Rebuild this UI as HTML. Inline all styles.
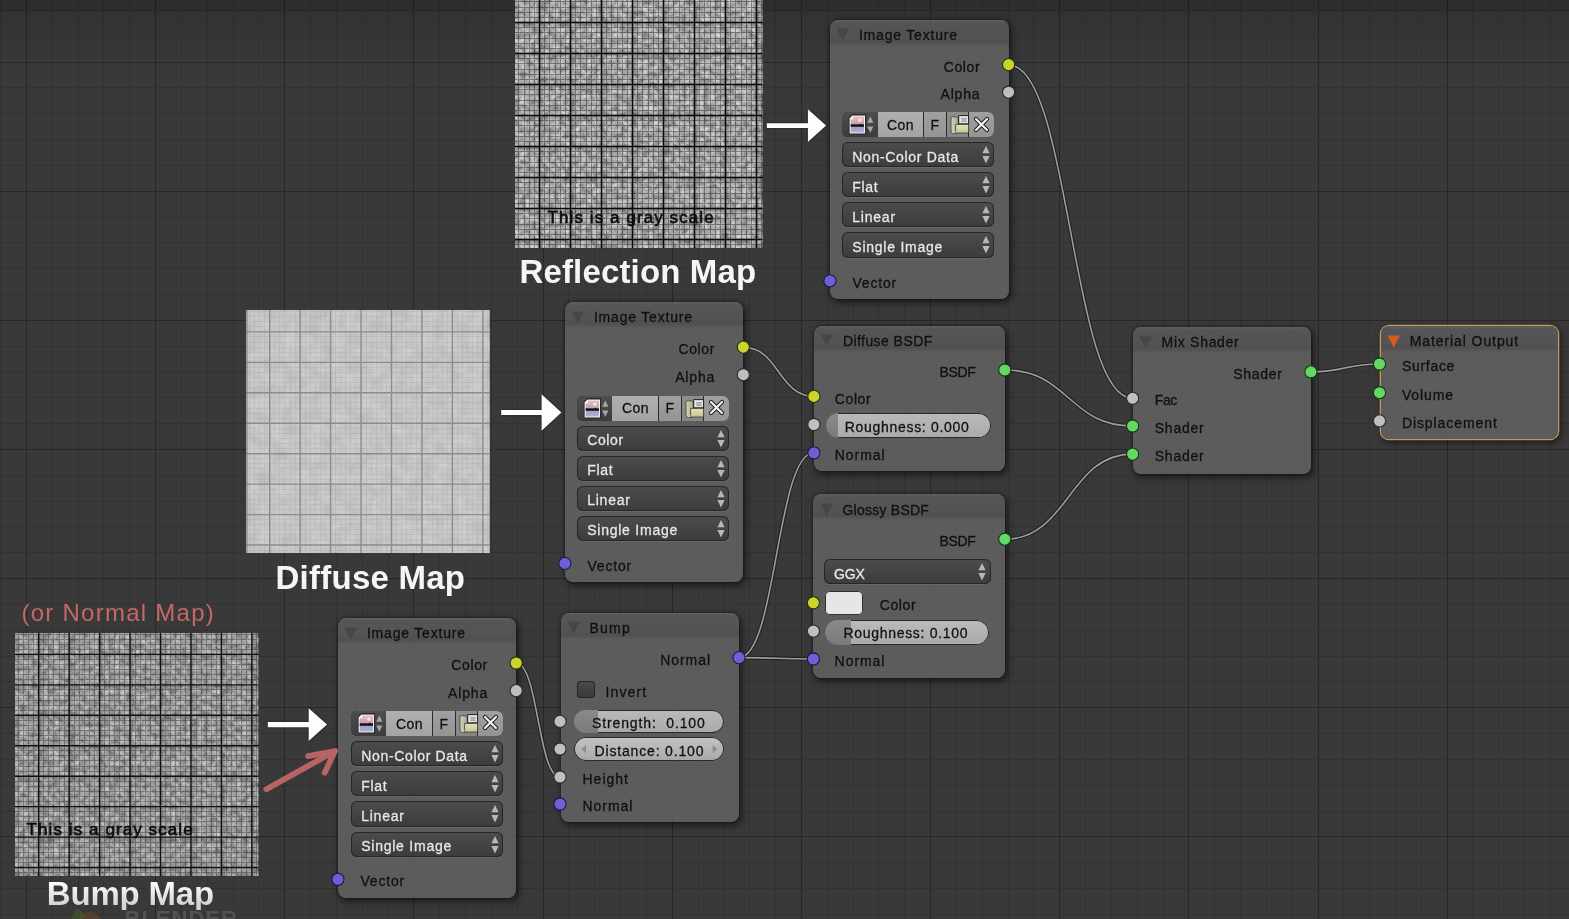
<!DOCTYPE html><html><head><meta charset="utf-8"><style>html,body{margin:0;padding:0;width:1569px;height:919px;overflow:hidden;background:#393939}.abs{position:absolute;overflow:visible}.t{position:absolute;white-space:pre;font-family:"Liberation Sans", sans-serif}.node{position:absolute;border-radius:8px;background:rgba(100,100,100,0.82);overflow:hidden}.hdr{position:absolute;left:0;right:0;top:0;background:linear-gradient(rgba(255,250,255,0.03) 0px,rgba(10,0,20,0.08) 3px,rgba(10,0,20,0.10) 17px,rgba(10,0,20,0.14) 22px,rgba(0,0,0,0) 100%)}.dd{position:absolute;border-radius:6px;background:linear-gradient(#4c4c4c,#3c3c3c);box-shadow:inset 0 0 0 1px #262626, 0 1px 0 rgba(255,255,255,0.08)}.idrow{position:absolute;border-radius:6px;overflow:hidden;box-shadow:inset 0 0 0 1px #262626}.sl{position:absolute;border-radius:12.5px;overflow:hidden;background:linear-gradient(#bababa,#aaaaaa);box-shadow:inset 0 0 0 1px #2a2a2a}</style></head><body><div style="position:relative;width:1569px;height:919px;overflow:hidden"><svg class="abs" width="1569" height="919" style="left:0;top:0" shape-rendering="crispEdges"><rect width="1569" height="919" fill="#393939"/><rect x="0" y="0" width="1" height="919" fill="#323232"/><rect x="26" y="0" width="1" height="919" fill="#272727"/><rect x="52" y="0" width="1" height="919" fill="#323232"/><rect x="78" y="0" width="1" height="919" fill="#323232"/><rect x="103" y="0" width="1" height="919" fill="#323232"/><rect x="129" y="0" width="1" height="919" fill="#323232"/><rect x="155" y="0" width="1" height="919" fill="#272727"/><rect x="181" y="0" width="1" height="919" fill="#323232"/><rect x="207" y="0" width="1" height="919" fill="#323232"/><rect x="233" y="0" width="1" height="919" fill="#323232"/><rect x="258" y="0" width="1" height="919" fill="#323232"/><rect x="284" y="0" width="1" height="919" fill="#272727"/><rect x="310" y="0" width="1" height="919" fill="#323232"/><rect x="336" y="0" width="1" height="919" fill="#323232"/><rect x="362" y="0" width="1" height="919" fill="#323232"/><rect x="388" y="0" width="1" height="919" fill="#323232"/><rect x="413" y="0" width="1" height="919" fill="#272727"/><rect x="439" y="0" width="1" height="919" fill="#323232"/><rect x="465" y="0" width="1" height="919" fill="#323232"/><rect x="491" y="0" width="1" height="919" fill="#323232"/><rect x="517" y="0" width="1" height="919" fill="#323232"/><rect x="543" y="0" width="1" height="919" fill="#272727"/><rect x="568" y="0" width="1" height="919" fill="#323232"/><rect x="594" y="0" width="1" height="919" fill="#323232"/><rect x="620" y="0" width="1" height="919" fill="#323232"/><rect x="646" y="0" width="1" height="919" fill="#323232"/><rect x="672" y="0" width="1" height="919" fill="#272727"/><rect x="698" y="0" width="1" height="919" fill="#323232"/><rect x="723" y="0" width="1" height="919" fill="#323232"/><rect x="749" y="0" width="1" height="919" fill="#323232"/><rect x="775" y="0" width="1" height="919" fill="#323232"/><rect x="801" y="0" width="1" height="919" fill="#272727"/><rect x="827" y="0" width="1" height="919" fill="#323232"/><rect x="853" y="0" width="1" height="919" fill="#323232"/><rect x="878" y="0" width="1" height="919" fill="#323232"/><rect x="904" y="0" width="1" height="919" fill="#323232"/><rect x="930" y="0" width="1" height="919" fill="#272727"/><rect x="956" y="0" width="1" height="919" fill="#323232"/><rect x="982" y="0" width="1" height="919" fill="#323232"/><rect x="1008" y="0" width="1" height="919" fill="#323232"/><rect x="1033" y="0" width="1" height="919" fill="#323232"/><rect x="1059" y="0" width="1" height="919" fill="#272727"/><rect x="1085" y="0" width="1" height="919" fill="#323232"/><rect x="1111" y="0" width="1" height="919" fill="#323232"/><rect x="1137" y="0" width="1" height="919" fill="#323232"/><rect x="1163" y="0" width="1" height="919" fill="#323232"/><rect x="1188" y="0" width="1" height="919" fill="#272727"/><rect x="1214" y="0" width="1" height="919" fill="#323232"/><rect x="1240" y="0" width="1" height="919" fill="#323232"/><rect x="1266" y="0" width="1" height="919" fill="#323232"/><rect x="1292" y="0" width="1" height="919" fill="#323232"/><rect x="1318" y="0" width="1" height="919" fill="#272727"/><rect x="1343" y="0" width="1" height="919" fill="#323232"/><rect x="1369" y="0" width="1" height="919" fill="#323232"/><rect x="1395" y="0" width="1" height="919" fill="#323232"/><rect x="1421" y="0" width="1" height="919" fill="#323232"/><rect x="1447" y="0" width="1" height="919" fill="#272727"/><rect x="1472" y="0" width="1" height="919" fill="#323232"/><rect x="1498" y="0" width="1" height="919" fill="#323232"/><rect x="1524" y="0" width="1" height="919" fill="#323232"/><rect x="1550" y="0" width="1" height="919" fill="#323232"/><rect x="0" y="-15" width="1569" height="1" fill="#323232"/><rect x="0" y="10" width="1569" height="1" fill="#323232"/><rect x="0" y="36" width="1569" height="1" fill="#323232"/><rect x="0" y="62" width="1569" height="1" fill="#272727"/><rect x="0" y="87" width="1569" height="1" fill="#323232"/><rect x="0" y="113" width="1569" height="1" fill="#323232"/><rect x="0" y="139" width="1569" height="1" fill="#323232"/><rect x="0" y="165" width="1569" height="1" fill="#323232"/><rect x="0" y="191" width="1569" height="1" fill="#272727"/><rect x="0" y="217" width="1569" height="1" fill="#323232"/><rect x="0" y="242" width="1569" height="1" fill="#323232"/><rect x="0" y="268" width="1569" height="1" fill="#323232"/><rect x="0" y="294" width="1569" height="1" fill="#323232"/><rect x="0" y="320" width="1569" height="1" fill="#272727"/><rect x="0" y="346" width="1569" height="1" fill="#323232"/><rect x="0" y="372" width="1569" height="1" fill="#323232"/><rect x="0" y="397" width="1569" height="1" fill="#323232"/><rect x="0" y="423" width="1569" height="1" fill="#323232"/><rect x="0" y="449" width="1569" height="1" fill="#272727"/><rect x="0" y="475" width="1569" height="1" fill="#323232"/><rect x="0" y="501" width="1569" height="1" fill="#323232"/><rect x="0" y="526" width="1569" height="1" fill="#323232"/><rect x="0" y="552" width="1569" height="1" fill="#323232"/><rect x="0" y="578" width="1569" height="1" fill="#272727"/><rect x="0" y="604" width="1569" height="1" fill="#323232"/><rect x="0" y="630" width="1569" height="1" fill="#323232"/><rect x="0" y="656" width="1569" height="1" fill="#323232"/><rect x="0" y="681" width="1569" height="1" fill="#323232"/><rect x="0" y="707" width="1569" height="1" fill="#272727"/><rect x="0" y="733" width="1569" height="1" fill="#323232"/><rect x="0" y="759" width="1569" height="1" fill="#323232"/><rect x="0" y="785" width="1569" height="1" fill="#323232"/><rect x="0" y="811" width="1569" height="1" fill="#323232"/><rect x="0" y="836" width="1569" height="1" fill="#272727"/><rect x="0" y="862" width="1569" height="1" fill="#323232"/><rect x="0" y="888" width="1569" height="1" fill="#323232"/><rect x="0" y="914" width="1569" height="1" fill="#323232"/><defs><linearGradient id="topsh" x1="0" y1="0" x2="0" y2="1"><stop offset="0" stop-color="#000" stop-opacity="0.13"/><stop offset="1" stop-color="#000" stop-opacity="0"/></linearGradient></defs><rect width="1569" height="10.5" fill="#000" opacity="0.2"/><rect y="10.5" width="1569" height="60" fill="url(#topsh)"/></svg><svg class="abs" width="247.5" height="248" style="left:515px;top:0px"><defs><filter id="n_refl" x="0" y="0" width="100%" height="100%" color-interpolation-filters="sRGB"><feTurbulence type="fractalNoise" baseFrequency="0.18" numOctaves="4" seed="28"/><feColorMatrix type="matrix" values="1.8 0 0 0 -0.4  1.8 0 0 0 -0.4  1.8 0 0 0 -0.4  0 0 0 0 1"/></filter></defs><rect width="247.5" height="248" fill="#ababab"/><rect width="247.5" height="248" filter="url(#n_refl)" opacity="0.5" style="mix-blend-mode:overlay"/><path d="M3.83 0V248M9 0V248M14.17 0V248M19.33 0V248M29.67 0V248M34.83 0V248M40 0V248M45.17 0V248M50.33 0V248M60.67 0V248M65.83 0V248M71 0V248M76.17 0V248M81.33 0V248M91.67 0V248M96.83 0V248M102 0V248M107.17 0V248M112.33 0V248M122.67 0V248M127.83 0V248M133 0V248M138.17 0V248M143.33 0V248M153.67 0V248M158.83 0V248M164 0V248M169.17 0V248M174.33 0V248M184.67 0V248M189.83 0V248M195 0V248M200.17 0V248M205.33 0V248M215.67 0V248M220.83 0V248M226 0V248M231.17 0V248M236.33 0V248M246.67 0V248M0 1.83H247.5M0 7H247.5M0 12.17H247.5M0 17.33H247.5M0 27.67H247.5M0 32.83H247.5M0 38H247.5M0 43.17H247.5M0 48.33H247.5M0 58.67H247.5M0 63.83H247.5M0 69H247.5M0 74.17H247.5M0 79.33H247.5M0 89.67H247.5M0 94.83H247.5M0 100H247.5M0 105.17H247.5M0 110.33H247.5M0 120.67H247.5M0 125.83H247.5M0 131H247.5M0 136.17H247.5M0 141.33H247.5M0 151.67H247.5M0 156.83H247.5M0 162H247.5M0 167.17H247.5M0 172.33H247.5M0 182.67H247.5M0 187.83H247.5M0 193H247.5M0 198.17H247.5M0 203.33H247.5M0 213.67H247.5M0 218.83H247.5M0 224H247.5M0 229.17H247.5M0 234.33H247.5M0 244.67H247.5" stroke="#202020" stroke-width="1" opacity="0.45" fill="none" shape-rendering="crispEdges"/><filter id="rough_refl"><feTurbulence type="turbulence" baseFrequency="0.5" numOctaves="1" seed="3"/><feDisplacementMap in="SourceGraphic" scale="3.5"/></filter><path d="M24.5 0V248M55.5 0V248M86.5 0V248M117.5 0V248M148.5 0V248M179.5 0V248M210.5 0V248M241.5 0V248M0 22.5H247.5M0 53.5H247.5M0 84.5H247.5M0 115.5H247.5M0 146.5H247.5M0 177.5H247.5M0 208.5H247.5M0 239.5H247.5" stroke="#080808" stroke-width="4.0" opacity="0.14" fill="none" filter="url(#rough_refl)"/><path d="M24.5 0V248M55.5 0V248M86.5 0V248M117.5 0V248M148.5 0V248M179.5 0V248M210.5 0V248M241.5 0V248M0 22.5H247.5M0 53.5H247.5M0 84.5H247.5M0 115.5H247.5M0 146.5H247.5M0 177.5H247.5M0 208.5H247.5M0 239.5H247.5" stroke="#080808" stroke-width="1.5" fill="none"/></svg><svg class="abs" width="243.7" height="243" style="left:246.3px;top:310px"><defs><filter id="n_diff" x="0" y="0" width="100%" height="100%" color-interpolation-filters="sRGB"><feTurbulence type="fractalNoise" baseFrequency="0.08" numOctaves="4" seed="28"/><feColorMatrix type="matrix" values="1.5 0 0 0 -0.25  1.5 0 0 0 -0.25  1.5 0 0 0 -0.25  0 0 0 0 1"/></filter></defs><rect width="243.7" height="243" fill="#c7c7c9"/><rect width="243.7" height="243" filter="url(#n_diff)" opacity="0.16" style="mix-blend-mode:overlay"/><path d="M3.4 0V243M8.47 0V243M13.55 0V243M18.62 0V243M28.77 0V243M33.85 0V243M38.92 0V243M44 0V243M49.08 0V243M59.22 0V243M64.3 0V243M69.38 0V243M74.45 0V243M79.53 0V243M89.68 0V243M94.75 0V243M99.83 0V243M104.9 0V243M109.98 0V243M120.12 0V243M125.2 0V243M130.28 0V243M135.35 0V243M140.43 0V243M150.57 0V243M155.65 0V243M160.72 0V243M165.8 0V243M170.88 0V243M181.03 0V243M186.1 0V243M191.17 0V243M196.25 0V243M201.32 0V243M211.47 0V243M216.55 0V243M221.62 0V243M226.7 0V243M231.78 0V243M241.92 0V243M0 1.6H243.7M0 6.67H243.7M0 11.75H243.7M0 16.82H243.7M0 26.97H243.7M0 32.05H243.7M0 37.12H243.7M0 42.2H243.7M0 47.27H243.7M0 57.42H243.7M0 62.5H243.7M0 67.58H243.7M0 72.65H243.7M0 77.72H243.7M0 87.88H243.7M0 92.95H243.7M0 98.03H243.7M0 103.1H243.7M0 108.18H243.7M0 118.32H243.7M0 123.4H243.7M0 128.47H243.7M0 133.55H243.7M0 138.62H243.7M0 148.78H243.7M0 153.85H243.7M0 158.93H243.7M0 164H243.7M0 169.08H243.7M0 179.23H243.7M0 184.3H243.7M0 189.38H243.7M0 194.45H243.7M0 199.53H243.7M0 209.68H243.7M0 214.75H243.7M0 219.83H243.7M0 224.9H243.7M0 229.98H243.7M0 240.12H243.7" stroke="#808080" stroke-width="1" opacity="0.16" fill="none" shape-rendering="crispEdges"/><path d="M23.7 0V243M54.15 0V243M84.6 0V243M115.05 0V243M145.5 0V243M175.95 0V243M206.4 0V243M236.85 0V243M0 21.9H243.7M0 52.35H243.7M0 82.8H243.7M0 113.25H243.7M0 143.7H243.7M0 174.15H243.7M0 204.6H243.7M0 235.05H243.7" stroke="#8c8c8e" stroke-width="1.4" fill="none"/><rect x="0.5" y="0" width="1" height="243" fill="#7a7a7a"/></svg><svg class="abs" width="243.4" height="243" style="left:15px;top:633px"><defs><filter id="n_bump" x="0" y="0" width="100%" height="100%" color-interpolation-filters="sRGB"><feTurbulence type="fractalNoise" baseFrequency="0.18" numOctaves="4" seed="28"/><feColorMatrix type="matrix" values="1.7 0 0 0 -0.35  1.7 0 0 0 -0.35  1.7 0 0 0 -0.35  0 0 0 0 1"/></filter></defs><rect width="243.4" height="243" fill="#a0a0a0"/><rect width="243.4" height="243" filter="url(#n_bump)" opacity="0.42" style="mix-blend-mode:overlay"/><path d="M3.4 0V243M8.47 0V243M13.55 0V243M18.62 0V243M28.77 0V243M33.85 0V243M38.92 0V243M44 0V243M49.08 0V243M59.22 0V243M64.3 0V243M69.38 0V243M74.45 0V243M79.53 0V243M89.68 0V243M94.75 0V243M99.83 0V243M104.9 0V243M109.98 0V243M120.12 0V243M125.2 0V243M130.28 0V243M135.35 0V243M140.43 0V243M150.57 0V243M155.65 0V243M160.72 0V243M165.8 0V243M170.88 0V243M181.03 0V243M186.1 0V243M191.17 0V243M196.25 0V243M201.32 0V243M211.47 0V243M216.55 0V243M221.62 0V243M226.7 0V243M231.78 0V243M241.92 0V243M0 1.1H243.4M0 6.17H243.4M0 11.25H243.4M0 16.32H243.4M0 26.47H243.4M0 31.55H243.4M0 36.62H243.4M0 41.7H243.4M0 46.77H243.4M0 56.92H243.4M0 62H243.4M0 67.08H243.4M0 72.15H243.4M0 77.22H243.4M0 87.38H243.4M0 92.45H243.4M0 97.53H243.4M0 102.6H243.4M0 107.68H243.4M0 117.82H243.4M0 122.9H243.4M0 127.97H243.4M0 133.05H243.4M0 138.12H243.4M0 148.28H243.4M0 153.35H243.4M0 158.43H243.4M0 163.5H243.4M0 168.58H243.4M0 178.73H243.4M0 183.8H243.4M0 188.88H243.4M0 193.95H243.4M0 199.03H243.4M0 209.18H243.4M0 214.25H243.4M0 219.33H243.4M0 224.4H243.4M0 229.48H243.4M0 239.62H243.4" stroke="#2a2a2a" stroke-width="1" opacity="0.42" fill="none" shape-rendering="crispEdges"/><filter id="rough_bump"><feTurbulence type="turbulence" baseFrequency="0.5" numOctaves="1" seed="3"/><feDisplacementMap in="SourceGraphic" scale="3.5"/></filter><path d="M23.7 0V243M54.15 0V243M84.6 0V243M115.05 0V243M145.5 0V243M175.95 0V243M206.4 0V243M236.85 0V243M0 21.4H243.4M0 51.85H243.4M0 82.3H243.4M0 112.75H243.4M0 143.2H243.4M0 173.65H243.4M0 204.1H243.4M0 234.55H243.4" stroke="#101010" stroke-width="3.9" opacity="0.14" fill="none" filter="url(#rough_bump)"/><path d="M23.7 0V243M54.15 0V243M84.6 0V243M115.05 0V243M145.5 0V243M175.95 0V243M206.4 0V243M236.85 0V243M0 21.4H243.4M0 51.85H243.4M0 82.3H243.4M0 112.75H243.4M0 143.2H243.4M0 173.65H243.4M0 204.1H243.4M0 234.55H243.4" stroke="#101010" stroke-width="1.4" fill="none"/></svg><div class="t" style="left:547.6px;top:209.31px;font-size:17px;line-height:17px;color:#0a0a0a;letter-spacing:1.079px;font-weight:normal;-webkit-text-stroke:0.55px #0a0a0a">This is a gray scale</div><div class="t" style="left:26.6px;top:821.21px;font-size:17px;line-height:17px;color:#0a0a0a;letter-spacing:1.079px;font-weight:normal;-webkit-text-stroke:0.55px #0a0a0a">This is a gray scale</div><div class="t" style="left:519.5px;top:254.67px;font-size:33px;line-height:33px;color:#f6f6f6;letter-spacing:0.150px;font-weight:bold;">Reflection Map</div><div class="t" style="left:275.5px;top:561.27px;font-size:33px;line-height:33px;color:#f6f6f6;letter-spacing:0.250px;font-weight:bold;">Diffuse Map</div><div class="t" style="left:46.8px;top:877.27px;font-size:33px;line-height:33px;color:#f0f0f0;letter-spacing:-0.200px;font-weight:bold;background:linear-gradient(#fbfbfb 20%,#d4d4d4 85%);-webkit-background-clip:text;background-clip:text;-webkit-text-fill-color:transparent;">Bump Map</div><div class="t" style="left:21.5px;top:601.28px;font-size:24px;line-height:24px;color:#c46868;letter-spacing:1.258px;font-weight:normal;">(or Normal Map)</div><div class="node" style="left:829.9px;top:19.7px;width:178.7px;height:279.5px;box-shadow:2px 3px 7px 1px rgba(0,0,0,0.5), 0 0 2px 1px rgba(0,0,0,0.25);"><div class="hdr" style="height:26px"></div></div><svg class="abs" width="14" height="14" style="left:836.2px;top:27.2px"><path d="M0.5 1.5H13L6.75 13.5Z" fill="#47454a"/></svg><div class="t" style="left:858.9px;top:27.95px;font-size:14px;line-height:14px;color:#101010;letter-spacing:0.812px;font-weight:normal;-webkit-text-stroke:0.28px #101010;">Image Texture</div><div class="t" style="right:588.79px;top:59.75px;font-size:14px;line-height:14px;color:#101010;letter-spacing:0.606px;font-weight:normal;-webkit-text-stroke:0.28px #101010;">Color</div><div class="t" style="right:588.58px;top:87.35px;font-size:14px;line-height:14px;color:#101010;letter-spacing:0.823px;font-weight:normal;-webkit-text-stroke:0.28px #101010;">Alpha</div><div class="idrow" style="left:842.3px;top:112.1px;width:151.5px;height:25.2px"><div style="position:absolute;left:0px;top:0;width:35.3px;height:100%;background:linear-gradient(#4e4e4e,#3c3c3c);box-sizing:border-box"></div><div style="position:absolute;left:35.3px;top:0;width:45.7px;height:100%;background:linear-gradient(#b0b0b0,#a4a4a4);box-sizing:border-box"></div><div style="position:absolute;left:81px;top:0;width:22.9px;height:100%;background:linear-gradient(#a0a0a0,#949494);border-left:1px solid #2a2a2a;box-sizing:border-box"></div><div style="position:absolute;left:103.9px;top:0;width:22.3px;height:100%;background:linear-gradient(#8e8e8e,#868686);border-left:1px solid #2a2a2a;box-sizing:border-box"></div><div style="position:absolute;left:126.2px;top:0;width:25.3px;height:100%;background:linear-gradient(#a0a0a0,#949494);border-left:1px solid #2a2a2a;box-sizing:border-box"></div></div><svg class="abs" width="36" height="24" style="left:842.3px;top:112.1px"><defs><linearGradient id="imgic" x1="0" y1="0" x2="0" y2="1"><stop offset="0" stop-color="#e4c0c8"/><stop offset="0.5" stop-color="#cc98a4"/><stop offset="0.5" stop-color="#9a9ac8"/><stop offset="1" stop-color="#b0b0d8"/></linearGradient><radialGradient id="sun" cx="0.5" cy="0.5" r="0.5"><stop offset="0" stop-color="#fff" stop-opacity="0.95"/><stop offset="1" stop-color="#fff" stop-opacity="0"/></radialGradient></defs><path d="M10.3 2.3H23.8V22.3H6.8V5.8Z" fill="#1a1a1a" opacity="0.85"/><path d="M10.6 3.4H23V21.6H7.6V6.4Z" fill="#f2f2f2"/><path d="M11.3 4.6H22V20.6H8.7V7.2H11.3Z" fill="url(#imgic)"/><circle cx="17.8" cy="8.2" r="2.6" fill="url(#sun)"/><path d="M8.7 12.6L10 12.1L11.2 12.7L12.6 11.9L14 12.5L15.5 12.2L17 12.6L18.6 11.8L20 12.4L22 12.2V14.8H8.7Z" fill="#101010"/><path d="M7.6 6.4L10.6 3.4V6.4Z" fill="#fafafa"/><path d="M28.3 4.6L31.4 10.7H25.2Z M28.3 20.7L31.4 14.5H25.2Z" fill="#a6a6a6"/></svg><div class="t" style="left:887px;top:117.85px;font-size:14px;line-height:14px;color:#111;letter-spacing:0.480px;font-weight:normal;-webkit-text-stroke:0.28px #111;">Con</div><div class="t" style="left:930.5px;top:117.85px;font-size:14px;line-height:14px;color:#111;letter-spacing:-0.865px;font-weight:normal;-webkit-text-stroke:0.28px #111;">F</div><svg class="abs" width="24" height="25" style="left:946.2px;top:112.1px"><defs><linearGradient id="fold" x1="0" y1="0" x2="0" y2="1"><stop offset="0" stop-color="#e4e2c0"/><stop offset="1" stop-color="#c8c490"/></linearGradient><linearGradient id="foldb" x1="0" y1="0" x2="1" y2="0"><stop offset="0" stop-color="#d8d6b8"/><stop offset="1" stop-color="#a8a688"/></linearGradient></defs><path d="M5 5.6Q5 4.8 6 4.8H10.5L12.3 6.2V21H7.2Q5 21 5 19Z" fill="url(#foldb)" stroke="#3a3a30" stroke-width="0.8"/><path d="M12.7 3.6H22.6V11.8H12.7Z" fill="#e6e6e6" stroke="#111" stroke-width="0.9"/><path d="M15.3 6.8H20.6M15.3 9.1H20.6" stroke="#8a8a8a" stroke-width="1.2"/><path d="M9.6 12.4H22.6V21H8.2Q9.6 20.4 9.6 19Z" fill="url(#fold)" stroke="#3a3a30" stroke-width="0.8"/><path d="M6 19.6Q7.5 21.5 9.4 19.8" fill="none" stroke="#f0eed8" stroke-width="1"/></svg><svg class="abs" width="18" height="18" style="left:973px;top:115.6px"><path d="M3 3L14 14M14 3L3 14" stroke="#1e1e1e" stroke-width="4.2" stroke-linecap="round"/><path d="M3 3L14 14M14 3L3 14" stroke="#f4f4f4" stroke-width="2.2" stroke-linecap="round"/></svg><div class="dd" style="left:842.3px;top:142.1px;width:152.2px;height:25.2px"></div><div class="t" style="left:852.3px;top:149.75px;font-size:14px;line-height:14px;color:#e8e8e8;letter-spacing:0.669px;font-weight:normal;-webkit-text-stroke:0.28px #e8e8e8;">Non-Color Data</div><svg class="abs" width="10" height="24" style="left:981.1px;top:142.1px"><path d="M5 3.9L8.6 11.2H1.4Z M5 21.4L8.6 14H1.4Z" fill="#b8b8b8"/></svg><div class="dd" style="left:842.3px;top:172.2px;width:152.2px;height:25.2px"></div><div class="t" style="left:852.3px;top:179.85px;font-size:14px;line-height:14px;color:#e8e8e8;letter-spacing:0.705px;font-weight:normal;-webkit-text-stroke:0.28px #e8e8e8;">Flat</div><svg class="abs" width="10" height="24" style="left:981.1px;top:172.2px"><path d="M5 3.9L8.6 11.2H1.4Z M5 21.4L8.6 14H1.4Z" fill="#b8b8b8"/></svg><div class="dd" style="left:842.3px;top:202.3px;width:152.2px;height:25.2px"></div><div class="t" style="left:852.3px;top:209.95px;font-size:14px;line-height:14px;color:#e8e8e8;letter-spacing:0.769px;font-weight:normal;-webkit-text-stroke:0.28px #e8e8e8;">Linear</div><svg class="abs" width="10" height="24" style="left:981.1px;top:202.3px"><path d="M5 3.9L8.6 11.2H1.4Z M5 21.4L8.6 14H1.4Z" fill="#b8b8b8"/></svg><div class="dd" style="left:842.3px;top:232.4px;width:152.2px;height:25.2px"></div><div class="t" style="left:852.3px;top:240.05px;font-size:14px;line-height:14px;color:#e8e8e8;letter-spacing:0.760px;font-weight:normal;-webkit-text-stroke:0.28px #e8e8e8;">Single Image</div><svg class="abs" width="10" height="24" style="left:981.1px;top:232.4px"><path d="M5 3.9L8.6 11.2H1.4Z M5 21.4L8.6 14H1.4Z" fill="#b8b8b8"/></svg><div class="t" style="left:852.4px;top:276.05px;font-size:14px;line-height:14px;color:#101010;letter-spacing:0.833px;font-weight:normal;-webkit-text-stroke:0.28px #101010;">Vector</div><div class="node" style="left:564.9px;top:302.2px;width:178.4px;height:279.5px;box-shadow:2px 3px 7px 1px rgba(0,0,0,0.5), 0 0 2px 1px rgba(0,0,0,0.25);"><div class="hdr" style="height:26px"></div></div><svg class="abs" width="14" height="14" style="left:571.2px;top:309.7px"><path d="M0.5 1.5H13L6.75 13.5Z" fill="#47454a"/></svg><div class="t" style="left:593.9px;top:310.45px;font-size:14px;line-height:14px;color:#101010;letter-spacing:0.812px;font-weight:normal;-webkit-text-stroke:0.28px #101010;">Image Texture</div><div class="t" style="right:854.09px;top:342.25px;font-size:14px;line-height:14px;color:#101010;letter-spacing:0.606px;font-weight:normal;-webkit-text-stroke:0.28px #101010;">Color</div><div class="t" style="right:853.88px;top:369.85px;font-size:14px;line-height:14px;color:#101010;letter-spacing:0.823px;font-weight:normal;-webkit-text-stroke:0.28px #101010;">Alpha</div><div class="idrow" style="left:577.2px;top:395.6px;width:151.5px;height:25.2px"><div style="position:absolute;left:0px;top:0;width:35.3px;height:100%;background:linear-gradient(#4e4e4e,#3c3c3c);box-sizing:border-box"></div><div style="position:absolute;left:35.3px;top:0;width:45.7px;height:100%;background:linear-gradient(#b0b0b0,#a4a4a4);box-sizing:border-box"></div><div style="position:absolute;left:81px;top:0;width:22.9px;height:100%;background:linear-gradient(#a0a0a0,#949494);border-left:1px solid #2a2a2a;box-sizing:border-box"></div><div style="position:absolute;left:103.9px;top:0;width:22.3px;height:100%;background:linear-gradient(#8e8e8e,#868686);border-left:1px solid #2a2a2a;box-sizing:border-box"></div><div style="position:absolute;left:126.2px;top:0;width:25.3px;height:100%;background:linear-gradient(#a0a0a0,#949494);border-left:1px solid #2a2a2a;box-sizing:border-box"></div></div><svg class="abs" width="36" height="24" style="left:577.2px;top:395.6px"><defs><linearGradient id="imgic" x1="0" y1="0" x2="0" y2="1"><stop offset="0" stop-color="#e4c0c8"/><stop offset="0.5" stop-color="#cc98a4"/><stop offset="0.5" stop-color="#9a9ac8"/><stop offset="1" stop-color="#b0b0d8"/></linearGradient><radialGradient id="sun" cx="0.5" cy="0.5" r="0.5"><stop offset="0" stop-color="#fff" stop-opacity="0.95"/><stop offset="1" stop-color="#fff" stop-opacity="0"/></radialGradient></defs><path d="M10.3 2.3H23.8V22.3H6.8V5.8Z" fill="#1a1a1a" opacity="0.85"/><path d="M10.6 3.4H23V21.6H7.6V6.4Z" fill="#f2f2f2"/><path d="M11.3 4.6H22V20.6H8.7V7.2H11.3Z" fill="url(#imgic)"/><circle cx="17.8" cy="8.2" r="2.6" fill="url(#sun)"/><path d="M8.7 12.6L10 12.1L11.2 12.7L12.6 11.9L14 12.5L15.5 12.2L17 12.6L18.6 11.8L20 12.4L22 12.2V14.8H8.7Z" fill="#101010"/><path d="M7.6 6.4L10.6 3.4V6.4Z" fill="#fafafa"/><path d="M28.3 4.6L31.4 10.7H25.2Z M28.3 20.7L31.4 14.5H25.2Z" fill="#a6a6a6"/></svg><div class="t" style="left:621.9px;top:401.35px;font-size:14px;line-height:14px;color:#111;letter-spacing:0.480px;font-weight:normal;-webkit-text-stroke:0.28px #111;">Con</div><div class="t" style="left:665.4px;top:401.35px;font-size:14px;line-height:14px;color:#111;letter-spacing:-0.865px;font-weight:normal;-webkit-text-stroke:0.28px #111;">F</div><svg class="abs" width="24" height="25" style="left:681.1px;top:395.6px"><defs><linearGradient id="fold" x1="0" y1="0" x2="0" y2="1"><stop offset="0" stop-color="#e4e2c0"/><stop offset="1" stop-color="#c8c490"/></linearGradient><linearGradient id="foldb" x1="0" y1="0" x2="1" y2="0"><stop offset="0" stop-color="#d8d6b8"/><stop offset="1" stop-color="#a8a688"/></linearGradient></defs><path d="M5 5.6Q5 4.8 6 4.8H10.5L12.3 6.2V21H7.2Q5 21 5 19Z" fill="url(#foldb)" stroke="#3a3a30" stroke-width="0.8"/><path d="M12.7 3.6H22.6V11.8H12.7Z" fill="#e6e6e6" stroke="#111" stroke-width="0.9"/><path d="M15.3 6.8H20.6M15.3 9.1H20.6" stroke="#8a8a8a" stroke-width="1.2"/><path d="M9.6 12.4H22.6V21H8.2Q9.6 20.4 9.6 19Z" fill="url(#fold)" stroke="#3a3a30" stroke-width="0.8"/><path d="M6 19.6Q7.5 21.5 9.4 19.8" fill="none" stroke="#f0eed8" stroke-width="1"/></svg><svg class="abs" width="18" height="18" style="left:707.9px;top:399.1px"><path d="M3 3L14 14M14 3L3 14" stroke="#1e1e1e" stroke-width="4.2" stroke-linecap="round"/><path d="M3 3L14 14M14 3L3 14" stroke="#f4f4f4" stroke-width="2.2" stroke-linecap="round"/></svg><div class="dd" style="left:577.2px;top:425.5px;width:152.2px;height:25.2px"></div><div class="t" style="left:587.2px;top:433.15px;font-size:14px;line-height:14px;color:#e8e8e8;letter-spacing:0.606px;font-weight:normal;-webkit-text-stroke:0.28px #e8e8e8;">Color</div><svg class="abs" width="10" height="24" style="left:716px;top:425.5px"><path d="M5 3.9L8.6 11.2H1.4Z M5 21.4L8.6 14H1.4Z" fill="#b8b8b8"/></svg><div class="dd" style="left:577.2px;top:455.6px;width:152.2px;height:25.2px"></div><div class="t" style="left:587.2px;top:463.25px;font-size:14px;line-height:14px;color:#e8e8e8;letter-spacing:0.705px;font-weight:normal;-webkit-text-stroke:0.28px #e8e8e8;">Flat</div><svg class="abs" width="10" height="24" style="left:716px;top:455.6px"><path d="M5 3.9L8.6 11.2H1.4Z M5 21.4L8.6 14H1.4Z" fill="#b8b8b8"/></svg><div class="dd" style="left:577.2px;top:485.7px;width:152.2px;height:25.2px"></div><div class="t" style="left:587.2px;top:493.35px;font-size:14px;line-height:14px;color:#e8e8e8;letter-spacing:0.769px;font-weight:normal;-webkit-text-stroke:0.28px #e8e8e8;">Linear</div><svg class="abs" width="10" height="24" style="left:716px;top:485.7px"><path d="M5 3.9L8.6 11.2H1.4Z M5 21.4L8.6 14H1.4Z" fill="#b8b8b8"/></svg><div class="dd" style="left:577.2px;top:515.8px;width:152.2px;height:25.2px"></div><div class="t" style="left:587.2px;top:523.45px;font-size:14px;line-height:14px;color:#e8e8e8;letter-spacing:0.760px;font-weight:normal;-webkit-text-stroke:0.28px #e8e8e8;">Single Image</div><svg class="abs" width="10" height="24" style="left:716px;top:515.8px"><path d="M5 3.9L8.6 11.2H1.4Z M5 21.4L8.6 14H1.4Z" fill="#b8b8b8"/></svg><div class="t" style="left:587.4px;top:558.55px;font-size:14px;line-height:14px;color:#101010;letter-spacing:0.833px;font-weight:normal;-webkit-text-stroke:0.28px #101010;">Vector</div><div class="node" style="left:337.9px;top:618.1px;width:178.3px;height:279.5px;box-shadow:2px 3px 7px 1px rgba(0,0,0,0.5), 0 0 2px 1px rgba(0,0,0,0.25);"><div class="hdr" style="height:26px"></div></div><svg class="abs" width="14" height="14" style="left:344.2px;top:625.6px"><path d="M0.5 1.5H13L6.75 13.5Z" fill="#47454a"/></svg><div class="t" style="left:366.9px;top:626.35px;font-size:14px;line-height:14px;color:#101010;letter-spacing:0.812px;font-weight:normal;-webkit-text-stroke:0.28px #101010;">Image Texture</div><div class="t" style="right:1081.19px;top:658.15px;font-size:14px;line-height:14px;color:#101010;letter-spacing:0.606px;font-weight:normal;-webkit-text-stroke:0.28px #101010;">Color</div><div class="t" style="right:1080.98px;top:685.75px;font-size:14px;line-height:14px;color:#101010;letter-spacing:0.823px;font-weight:normal;-webkit-text-stroke:0.28px #101010;">Alpha</div><div class="idrow" style="left:351.2px;top:710.8px;width:151.5px;height:25.2px"><div style="position:absolute;left:0px;top:0;width:35.3px;height:100%;background:linear-gradient(#4e4e4e,#3c3c3c);box-sizing:border-box"></div><div style="position:absolute;left:35.3px;top:0;width:45.7px;height:100%;background:linear-gradient(#b0b0b0,#a4a4a4);box-sizing:border-box"></div><div style="position:absolute;left:81px;top:0;width:22.9px;height:100%;background:linear-gradient(#a0a0a0,#949494);border-left:1px solid #2a2a2a;box-sizing:border-box"></div><div style="position:absolute;left:103.9px;top:0;width:22.3px;height:100%;background:linear-gradient(#8e8e8e,#868686);border-left:1px solid #2a2a2a;box-sizing:border-box"></div><div style="position:absolute;left:126.2px;top:0;width:25.3px;height:100%;background:linear-gradient(#a0a0a0,#949494);border-left:1px solid #2a2a2a;box-sizing:border-box"></div></div><svg class="abs" width="36" height="24" style="left:351.2px;top:710.8px"><defs><linearGradient id="imgic" x1="0" y1="0" x2="0" y2="1"><stop offset="0" stop-color="#e4c0c8"/><stop offset="0.5" stop-color="#cc98a4"/><stop offset="0.5" stop-color="#9a9ac8"/><stop offset="1" stop-color="#b0b0d8"/></linearGradient><radialGradient id="sun" cx="0.5" cy="0.5" r="0.5"><stop offset="0" stop-color="#fff" stop-opacity="0.95"/><stop offset="1" stop-color="#fff" stop-opacity="0"/></radialGradient></defs><path d="M10.3 2.3H23.8V22.3H6.8V5.8Z" fill="#1a1a1a" opacity="0.85"/><path d="M10.6 3.4H23V21.6H7.6V6.4Z" fill="#f2f2f2"/><path d="M11.3 4.6H22V20.6H8.7V7.2H11.3Z" fill="url(#imgic)"/><circle cx="17.8" cy="8.2" r="2.6" fill="url(#sun)"/><path d="M8.7 12.6L10 12.1L11.2 12.7L12.6 11.9L14 12.5L15.5 12.2L17 12.6L18.6 11.8L20 12.4L22 12.2V14.8H8.7Z" fill="#101010"/><path d="M7.6 6.4L10.6 3.4V6.4Z" fill="#fafafa"/><path d="M28.3 4.6L31.4 10.7H25.2Z M28.3 20.7L31.4 14.5H25.2Z" fill="#a6a6a6"/></svg><div class="t" style="left:395.9px;top:716.55px;font-size:14px;line-height:14px;color:#111;letter-spacing:0.480px;font-weight:normal;-webkit-text-stroke:0.28px #111;">Con</div><div class="t" style="left:439.4px;top:716.55px;font-size:14px;line-height:14px;color:#111;letter-spacing:-0.865px;font-weight:normal;-webkit-text-stroke:0.28px #111;">F</div><svg class="abs" width="24" height="25" style="left:455.1px;top:710.8px"><defs><linearGradient id="fold" x1="0" y1="0" x2="0" y2="1"><stop offset="0" stop-color="#e4e2c0"/><stop offset="1" stop-color="#c8c490"/></linearGradient><linearGradient id="foldb" x1="0" y1="0" x2="1" y2="0"><stop offset="0" stop-color="#d8d6b8"/><stop offset="1" stop-color="#a8a688"/></linearGradient></defs><path d="M5 5.6Q5 4.8 6 4.8H10.5L12.3 6.2V21H7.2Q5 21 5 19Z" fill="url(#foldb)" stroke="#3a3a30" stroke-width="0.8"/><path d="M12.7 3.6H22.6V11.8H12.7Z" fill="#e6e6e6" stroke="#111" stroke-width="0.9"/><path d="M15.3 6.8H20.6M15.3 9.1H20.6" stroke="#8a8a8a" stroke-width="1.2"/><path d="M9.6 12.4H22.6V21H8.2Q9.6 20.4 9.6 19Z" fill="url(#fold)" stroke="#3a3a30" stroke-width="0.8"/><path d="M6 19.6Q7.5 21.5 9.4 19.8" fill="none" stroke="#f0eed8" stroke-width="1"/></svg><svg class="abs" width="18" height="18" style="left:481.9px;top:714.3px"><path d="M3 3L14 14M14 3L3 14" stroke="#1e1e1e" stroke-width="4.2" stroke-linecap="round"/><path d="M3 3L14 14M14 3L3 14" stroke="#f4f4f4" stroke-width="2.2" stroke-linecap="round"/></svg><div class="dd" style="left:351.2px;top:741.2px;width:152.2px;height:25.2px"></div><div class="t" style="left:361.2px;top:748.85px;font-size:14px;line-height:14px;color:#e8e8e8;letter-spacing:0.669px;font-weight:normal;-webkit-text-stroke:0.28px #e8e8e8;">Non-Color Data</div><svg class="abs" width="10" height="24" style="left:490px;top:741.2px"><path d="M5 3.9L8.6 11.2H1.4Z M5 21.4L8.6 14H1.4Z" fill="#b8b8b8"/></svg><div class="dd" style="left:351.2px;top:771.3px;width:152.2px;height:25.2px"></div><div class="t" style="left:361.2px;top:778.95px;font-size:14px;line-height:14px;color:#e8e8e8;letter-spacing:0.705px;font-weight:normal;-webkit-text-stroke:0.28px #e8e8e8;">Flat</div><svg class="abs" width="10" height="24" style="left:490px;top:771.3px"><path d="M5 3.9L8.6 11.2H1.4Z M5 21.4L8.6 14H1.4Z" fill="#b8b8b8"/></svg><div class="dd" style="left:351.2px;top:801.4px;width:152.2px;height:25.2px"></div><div class="t" style="left:361.2px;top:809.05px;font-size:14px;line-height:14px;color:#e8e8e8;letter-spacing:0.769px;font-weight:normal;-webkit-text-stroke:0.28px #e8e8e8;">Linear</div><svg class="abs" width="10" height="24" style="left:490px;top:801.4px"><path d="M5 3.9L8.6 11.2H1.4Z M5 21.4L8.6 14H1.4Z" fill="#b8b8b8"/></svg><div class="dd" style="left:351.2px;top:831.5px;width:152.2px;height:25.2px"></div><div class="t" style="left:361.2px;top:839.15px;font-size:14px;line-height:14px;color:#e8e8e8;letter-spacing:0.760px;font-weight:normal;-webkit-text-stroke:0.28px #e8e8e8;">Single Image</div><svg class="abs" width="10" height="24" style="left:490px;top:831.5px"><path d="M5 3.9L8.6 11.2H1.4Z M5 21.4L8.6 14H1.4Z" fill="#b8b8b8"/></svg><div class="t" style="left:360.4px;top:874.45px;font-size:14px;line-height:14px;color:#101010;letter-spacing:0.833px;font-weight:normal;-webkit-text-stroke:0.28px #101010;">Vector</div><div class="node" style="left:813.9px;top:325.7px;width:190.9px;height:145.6px;box-shadow:2px 3px 7px 1px rgba(0,0,0,0.5), 0 0 2px 1px rgba(0,0,0,0.25);"><div class="hdr" style="height:26px"></div></div><svg class="abs" width="14" height="14" style="left:820.2px;top:333.2px"><path d="M0.5 1.5H13L6.75 13.5Z" fill="#47454a"/></svg><div class="t" style="left:842.9px;top:333.95px;font-size:14px;line-height:14px;color:#101010;letter-spacing:0.439px;font-weight:normal;-webkit-text-stroke:0.28px #101010;">Diffuse BSDF</div><div class="t" style="right:593.51px;top:365.15px;font-size:14px;line-height:14px;color:#101010;letter-spacing:-0.312px;font-weight:normal;-webkit-text-stroke:0.28px #101010;">BSDF</div><div class="t" style="left:834.8px;top:391.55px;font-size:14px;line-height:14px;color:#101010;letter-spacing:0.606px;font-weight:normal;-webkit-text-stroke:0.28px #101010;">Color</div><div class="sl" style="left:825.9px;top:413px;width:164.7px;height:24.5px"><div style="position:absolute;left:0;top:0;bottom:0;width:12.25px;background:linear-gradient(#8a8a8a,#7a7a7a)"></div></div><div class="t" style="left:844.8px;top:419.75px;font-size:14px;line-height:14px;color:#111;letter-spacing:0.690px;font-weight:normal;-webkit-text-stroke:0.28px #111;">Roughness: 0.000</div><div class="t" style="left:834.8px;top:447.95px;font-size:14px;line-height:14px;color:#101010;letter-spacing:0.943px;font-weight:normal;-webkit-text-stroke:0.28px #101010;">Normal</div><div class="node" style="left:813.4px;top:494.4px;width:191.4px;height:183.6px;box-shadow:2px 3px 7px 1px rgba(0,0,0,0.5), 0 0 2px 1px rgba(0,0,0,0.25);"><div class="hdr" style="height:26px"></div></div><svg class="abs" width="14" height="14" style="left:819.7px;top:501.9px"><path d="M0.5 1.5H13L6.75 13.5Z" fill="#47454a"/></svg><div class="t" style="left:842.4px;top:502.65px;font-size:14px;line-height:14px;color:#101010;letter-spacing:0.247px;font-weight:normal;-webkit-text-stroke:0.28px #101010;">Glossy BSDF</div><div class="t" style="right:593.51px;top:534.35px;font-size:14px;line-height:14px;color:#101010;letter-spacing:-0.312px;font-weight:normal;-webkit-text-stroke:0.28px #101010;">BSDF</div><div class="dd" style="left:824.1px;top:559.3px;width:166.7px;height:25px"></div><div class="t" style="left:834.1px;top:566.95px;font-size:14px;line-height:14px;color:#e8e8e8;letter-spacing:-0.222px;font-weight:normal;-webkit-text-stroke:0.28px #e8e8e8;">GGX</div><svg class="abs" width="10" height="24" style="left:977.4px;top:559.3px"><path d="M5 3.9L8.6 11.2H1.4Z M5 21.4L8.6 14H1.4Z" fill="#b8b8b8"/></svg><div style="position:absolute;left:825px;top:591px;width:37.5px;height:24px;border-radius:5px;background:#e6e6e6;box-shadow:inset 0 0 0 1px #303030"></div><div class="t" style="left:879.7px;top:597.95px;font-size:14px;line-height:14px;color:#101010;letter-spacing:0.606px;font-weight:normal;-webkit-text-stroke:0.28px #101010;">Color</div><div class="sl" style="left:825px;top:619.5px;width:164.2px;height:25px"><div style="position:absolute;left:0;top:0;bottom:0;width:26.42px;background:linear-gradient(#8a8a8a,#7a7a7a)"></div></div><div class="t" style="left:843.5px;top:626.25px;font-size:14px;line-height:14px;color:#111;letter-spacing:0.690px;font-weight:normal;-webkit-text-stroke:0.28px #111;">Roughness: 0.100</div><div class="t" style="left:834.6px;top:654.15px;font-size:14px;line-height:14px;color:#101010;letter-spacing:0.943px;font-weight:normal;-webkit-text-stroke:0.28px #101010;">Normal</div><div class="node" style="left:1132.6px;top:327px;width:178.3px;height:146.6px;box-shadow:2px 3px 7px 1px rgba(0,0,0,0.5), 0 0 2px 1px rgba(0,0,0,0.25);"><div class="hdr" style="height:26px"></div></div><svg class="abs" width="14" height="14" style="left:1138.9px;top:334.5px"><path d="M0.5 1.5H13L6.75 13.5Z" fill="#47454a"/></svg><div class="t" style="left:1161.6px;top:335.25px;font-size:14px;line-height:14px;color:#101010;letter-spacing:0.708px;font-weight:normal;-webkit-text-stroke:0.28px #101010;">Mix Shader</div><div class="t" style="right:286.37px;top:366.95px;font-size:14px;line-height:14px;color:#101010;letter-spacing:0.728px;font-weight:normal;-webkit-text-stroke:0.28px #101010;">Shader</div><div class="t" style="left:1154.8px;top:393.45px;font-size:14px;line-height:14px;color:#101010;letter-spacing:-0.410px;font-weight:normal;-webkit-text-stroke:0.28px #101010;">Fac</div><div class="t" style="left:1154.8px;top:421.15px;font-size:14px;line-height:14px;color:#101010;letter-spacing:0.728px;font-weight:normal;-webkit-text-stroke:0.28px #101010;">Shader</div><div class="t" style="left:1154.8px;top:449.25px;font-size:14px;line-height:14px;color:#101010;letter-spacing:0.728px;font-weight:normal;-webkit-text-stroke:0.28px #101010;">Shader</div><div class="node" style="left:1380.7px;top:326.1px;width:176.9px;height:112.7px;box-shadow:0 0 0 1.3px #c8965a, 2px 3px 7px 1px rgba(0,0,0,0.5), 0 0 2px 1px rgba(0,0,0,0.25);"><div class="hdr" style="height:26px"></div></div><svg class="abs" width="14" height="14" style="left:1387px;top:333.6px"><path d="M0.5 1.5H13L6.75 13.5Z" fill="#d65a1e"/></svg><div class="t" style="left:1409.7px;top:334.35px;font-size:14px;line-height:14px;color:#101010;letter-spacing:0.913px;font-weight:normal;-webkit-text-stroke:0.28px #101010;">Material Output</div><div class="t" style="left:1401.9px;top:359.15px;font-size:14px;line-height:14px;color:#101010;letter-spacing:0.706px;font-weight:normal;-webkit-text-stroke:0.28px #101010;">Surface</div><div class="t" style="left:1401.9px;top:387.85px;font-size:14px;line-height:14px;color:#101010;letter-spacing:0.907px;font-weight:normal;-webkit-text-stroke:0.28px #101010;">Volume</div><div class="t" style="left:1401.9px;top:416.05px;font-size:14px;line-height:14px;color:#101010;letter-spacing:0.920px;font-weight:normal;-webkit-text-stroke:0.28px #101010;">Displacement</div><div class="node" style="left:560.5px;top:612.5px;width:178.5px;height:209.8px;box-shadow:2px 3px 7px 1px rgba(0,0,0,0.5), 0 0 2px 1px rgba(0,0,0,0.25);"><div class="hdr" style="height:26px"></div></div><svg class="abs" width="14" height="14" style="left:566.8px;top:620px"><path d="M0.5 1.5H13L6.75 13.5Z" fill="#47454a"/></svg><div class="t" style="left:589.5px;top:620.75px;font-size:14px;line-height:14px;color:#101010;letter-spacing:1.237px;font-weight:normal;-webkit-text-stroke:0.28px #101010;">Bump</div><div class="t" style="right:858.06px;top:652.75px;font-size:14px;line-height:14px;color:#101010;letter-spacing:0.943px;font-weight:normal;-webkit-text-stroke:0.28px #101010;">Normal</div><div style="position:absolute;left:577px;top:681.4px;width:18px;height:17px;border-radius:4px;background:linear-gradient(#4a4a4a,#3a3a3a);box-shadow:inset 0 0 0 1px #262626"></div><div class="t" style="left:605.6px;top:685.15px;font-size:14px;line-height:14px;color:#101010;letter-spacing:1.082px;font-weight:normal;-webkit-text-stroke:0.28px #101010;">Invert</div><div class="sl" style="left:573.8px;top:709.6px;width:150.7px;height:23.8px"><div style="position:absolute;left:0;top:0;bottom:0;width:24.59px;background:linear-gradient(#8a8a8a,#7a7a7a)"></div></div><div class="t" style="left:592px;top:716.35px;font-size:14px;line-height:14px;color:#111;letter-spacing:0.875px;font-weight:normal;-webkit-text-stroke:0.28px #111;">Strength:  0.100</div><div class="sl" style="left:573.8px;top:737px;width:150.7px;height:24px;background:linear-gradient(#c4c4c4,#a8a8a8)"></div><div class="t" style="left:594.5px;top:743.95px;font-size:14px;line-height:14px;color:#111;letter-spacing:0.837px;font-weight:normal;-webkit-text-stroke:0.28px #111;">Distance: 0.100</div><svg class="abs" width="150" height="24" style="left:573.8px;top:737px"><path d="M7.3 12L12 8V16Z M143.4 12L138.7 8V16Z" fill="#8c8c8c"/></svg><div class="t" style="left:582.5px;top:772.15px;font-size:14px;line-height:14px;color:#101010;letter-spacing:1.007px;font-weight:normal;-webkit-text-stroke:0.28px #101010;">Height</div><div class="t" style="left:582.5px;top:799.15px;font-size:14px;line-height:14px;color:#101010;letter-spacing:0.943px;font-weight:normal;-webkit-text-stroke:0.28px #101010;">Normal</div><svg class="abs" width="1569" height="919" style="left:0;top:0"><defs><filter id="blur1" x="-20%" y="-20%" width="140%" height="140%"><feGaussianBlur stdDeviation="1.1"/></filter></defs><path d="M1008.6 64.9C1070.6 64.9 1070.6 398.3 1132.6 398.3" stroke="#1c1c1c" stroke-width="3.6" fill="none" opacity="0.9"/><path d="M743.3 347.2C778.6 347.2 778.6 396.4 813.9 396.4" stroke="#1c1c1c" stroke-width="3.6" fill="none" opacity="0.9"/><path d="M1004.8 370C1068.7 370 1068.7 426 1132.6 426" stroke="#1c1c1c" stroke-width="3.6" fill="none" opacity="0.9"/><path d="M1004.8 539.2C1068.7 539.2 1068.7 454.1 1132.6 454.1" stroke="#1c1c1c" stroke-width="3.6" fill="none" opacity="0.9"/><path d="M1310.9 371.8C1345.2 371.8 1345.2 364 1379.5 364" stroke="#1c1c1c" stroke-width="3.6" fill="none" opacity="0.9"/><path d="M516.2 663C538.1 663 538.1 777 560 777" stroke="#1c1c1c" stroke-width="3.6" fill="none" opacity="0.9"/><path d="M739 657.6C776.45 657.6 776.45 452.8 813.9 452.8" stroke="#1c1c1c" stroke-width="3.6" fill="none" opacity="0.9"/><path d="M739 657.6C776.2 657.6 776.2 659 813.4 659" stroke="#1c1c1c" stroke-width="3.6" fill="none" opacity="0.9"/><path d="M1008.6 64.9C1070.6 64.9 1070.6 398.3 1132.6 398.3" stroke="#9c9c9c" stroke-width="1.6" fill="none"/><path d="M743.3 347.2C778.6 347.2 778.6 396.4 813.9 396.4" stroke="#9c9c9c" stroke-width="1.6" fill="none"/><path d="M1004.8 370C1068.7 370 1068.7 426 1132.6 426" stroke="#9c9c9c" stroke-width="1.6" fill="none"/><path d="M1004.8 539.2C1068.7 539.2 1068.7 454.1 1132.6 454.1" stroke="#9c9c9c" stroke-width="1.6" fill="none"/><path d="M1310.9 371.8C1345.2 371.8 1345.2 364 1379.5 364" stroke="#9c9c9c" stroke-width="1.6" fill="none"/><path d="M516.2 663C538.1 663 538.1 777 560 777" stroke="#9c9c9c" stroke-width="1.6" fill="none"/><path d="M739 657.6C776.45 657.6 776.45 452.8 813.9 452.8" stroke="#9c9c9c" stroke-width="1.6" fill="none"/><path d="M739 657.6C776.2 657.6 776.2 659 813.4 659" stroke="#9c9c9c" stroke-width="1.6" fill="none"/><circle cx="1008.6" cy="64.6" r="6.1" fill="#cad42a" stroke="#2c2c10" stroke-width="1.1"/><circle cx="1008.6" cy="92.2" r="6.1" fill="#bfbfbf" stroke="#2a2a2a" stroke-width="1.1"/><circle cx="829.9" cy="280.9" r="6.1" fill="#6b60d6" stroke="#1c1840" stroke-width="1.1"/><circle cx="743.3" cy="347.1" r="6.1" fill="#cad42a" stroke="#2c2c10" stroke-width="1.1"/><circle cx="743.3" cy="374.7" r="6.1" fill="#bfbfbf" stroke="#2a2a2a" stroke-width="1.1"/><circle cx="564.9" cy="563.4" r="6.1" fill="#6b60d6" stroke="#1c1840" stroke-width="1.1"/><circle cx="516.2" cy="663" r="6.1" fill="#cad42a" stroke="#2c2c10" stroke-width="1.1"/><circle cx="516.2" cy="690.6" r="6.1" fill="#bfbfbf" stroke="#2a2a2a" stroke-width="1.1"/><circle cx="337.9" cy="879.3" r="6.1" fill="#6b60d6" stroke="#1c1840" stroke-width="1.1"/><circle cx="1004.8" cy="370" r="6.1" fill="#64d864" stroke="#103a10" stroke-width="1.1"/><circle cx="813.9" cy="396.4" r="6.1" fill="#cad42a" stroke="#2c2c10" stroke-width="1.1"/><circle cx="813.9" cy="424.5" r="6.1" fill="#bfbfbf" stroke="#2a2a2a" stroke-width="1.1"/><circle cx="813.9" cy="452.8" r="6.1" fill="#6b60d6" stroke="#1c1840" stroke-width="1.1"/><circle cx="1004.8" cy="539.2" r="6.1" fill="#64d864" stroke="#103a10" stroke-width="1.1"/><circle cx="813.4" cy="602.8" r="6.1" fill="#cad42a" stroke="#2c2c10" stroke-width="1.1"/><circle cx="813.4" cy="631.1" r="6.1" fill="#bfbfbf" stroke="#2a2a2a" stroke-width="1.1"/><circle cx="813.4" cy="659" r="6.1" fill="#6b60d6" stroke="#1c1840" stroke-width="1.1"/><circle cx="1310.9" cy="371.8" r="6.1" fill="#64d864" stroke="#103a10" stroke-width="1.1"/><circle cx="1132.6" cy="398.3" r="6.1" fill="#bfbfbf" stroke="#2a2a2a" stroke-width="1.1"/><circle cx="1132.6" cy="426" r="6.1" fill="#64d864" stroke="#103a10" stroke-width="1.1"/><circle cx="1132.6" cy="454.1" r="6.1" fill="#64d864" stroke="#103a10" stroke-width="1.1"/><circle cx="1379.5" cy="364" r="6.1" fill="#64d864" stroke="#103a10" stroke-width="1.1"/><circle cx="1379.5" cy="392.7" r="6.1" fill="#64d864" stroke="#103a10" stroke-width="1.1"/><circle cx="1379.5" cy="420.9" r="6.1" fill="#bfbfbf" stroke="#2a2a2a" stroke-width="1.1"/><circle cx="739" cy="657.6" r="6.1" fill="#6b60d6" stroke="#1c1840" stroke-width="1.1"/><circle cx="560" cy="721.4" r="6.1" fill="#bfbfbf" stroke="#2a2a2a" stroke-width="1.1"/><circle cx="560" cy="749" r="6.1" fill="#bfbfbf" stroke="#2a2a2a" stroke-width="1.1"/><circle cx="560" cy="777" r="6.1" fill="#bfbfbf" stroke="#2a2a2a" stroke-width="1.1"/><circle cx="560" cy="804" r="6.1" fill="#6b60d6" stroke="#1c1840" stroke-width="1.1"/><path d="M766.8 123.15H807.9V109.3L826.1 125.6L807.9 141.9V128.05H766.8Z" fill="#000" opacity="0.55" filter="url(#blur1)"/><path d="M766.8 123.15H807.9V109.3L826.1 125.6L807.9 141.9V128.05H766.8Z" fill="#fdfdfd"/><path d="M501.2 410.1H541.6V394.3L561.4 412.5L541.6 430.7V414.9H501.2Z" fill="#000" opacity="0.55" filter="url(#blur1)"/><path d="M501.2 410.1H541.6V394.3L561.4 412.5L541.6 430.7V414.9H501.2Z" fill="#fdfdfd"/><path d="M267.8 722H308.7V708.3L327 724.6L308.7 740.9V727.2H267.8Z" fill="#000" opacity="0.55" filter="url(#blur1)"/><path d="M267.8 722H308.7V708.3L327 724.6L308.7 740.9V727.2H267.8Z" fill="#fdfdfd"/><path d="M266.4 789.2L335 751M308.1 756.1L335 751L324.7 772.7" stroke="#b86464" stroke-width="5.8" stroke-linecap="round" stroke-linejoin="round" fill="none"/></svg><svg class="abs" width="60" height="30" style="left:55px;top:900px"><circle cx="35" cy="24" r="12" fill="#7a4a2a" opacity="0.45"/><path d="M10 30L22 8L30 14L20 30Z" fill="#4a6a2a" opacity="0.45"/></svg><div class="t" style="left:124.5px;top:907.88px;font-size:22px;line-height:22px;color:rgba(100,100,100,0.6);letter-spacing:1.000px;font-weight:bold;">BLENDER</div></div></body></html>
